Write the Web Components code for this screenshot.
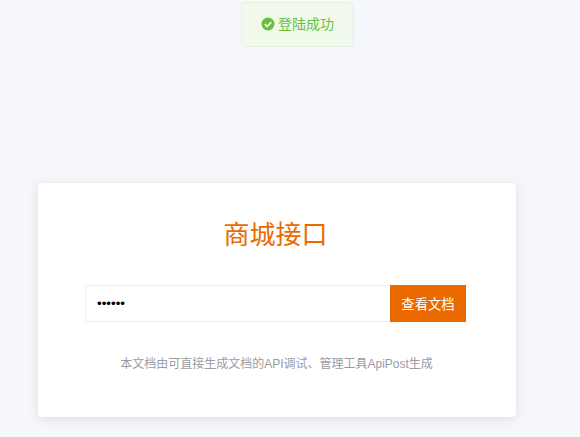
<!DOCTYPE html>
<html lang="zh">
<head>
<meta charset="utf-8">
<title>商城接口</title>
<style>
  html, body { margin: 0; height: 100%; overflow: hidden; background: #f6f7fb; }
  body { font-family: "Liberation Sans", "Noto Sans CJK SC", sans-serif; }
</style>
</head>
<body>
<toast-message>登陆成功</toast-message>
<login-card heading="商城接口" button="查看文档" value="123456">本文档由可直接生成文档的API调试、管理工具ApiPost生成</login-card>
<script>
class ToastMessage extends HTMLElement {
    connectedCallback() {
        this.attachShadow({ mode: 'open' });
        this.shadowRoot.innerHTML = `
      <style>
        :host {
          position: fixed;
          top: 2px;
          left: 241px;
          width: 113px;
          height: 45px;
          box-sizing: border-box;
          display: flex;
          align-items: center;
          justify-content: center;
          gap: 3px;
          padding-bottom: 1px;
          background: #f0f9eb;
          border: 1px solid #e1f3d8;
          border-radius: 4px;
          color: #67c23a;
          font-size: 14px;
          z-index: 10;
        }
        svg { width: 14px; height: 14px; flex: none; }
        span { margin-bottom: 2px; }
      </style>
      <svg viewBox="0 0 14 14">
        <circle cx="7" cy="7" r="6.5" fill="#67c23a"/>
        <path d="M3.8 7.2 L6.1 9.5 L10.3 5.2" fill="none" stroke="#f0f9eb" stroke-width="1.7"/>
      </svg>
      <span><slot></slot></span>
    `;
    }
}

class LoginCard extends HTMLElement {
    connectedCallback() {
        this.attachShadow({ mode: 'open' });
        this.shadowRoot.innerHTML = `
      <style>
        :host {
          display: block;
          box-sizing: border-box;
          width: 478px;
          height: 234px;
          margin: 183px 0 0 38px;
          padding: 34px 50px 0 47px;
          background: #fff;
          border-radius: 4px;
          box-shadow: 0 2px 12px 0 rgba(0, 0, 0, 0.1);
        }
        h1 {
          margin: 0;
          font-size: 26px;
          line-height: 36px;
          font-weight: 400;
          color: #eb6a00;
          text-align: center;
        }
        .row {
          display: flex;
          height: 37px;
          margin-top: 32px;
        }
        input {
          flex: 1;
          min-width: 0;
          box-sizing: border-box;
          border: 1px solid #eeeeee;
          border-right: 0;
          outline: none;
          padding: 0 11px;
          font-size: 13.333px;
          font-family: inherit;
          color: #000;
          background: #fff;
        }
        button {
          width: 76px;
          border: 0;
          padding: 0;
          background: #eb6a00;
          color: #fff;
          font-size: 13.333px;
          font-family: inherit;
        }
        p {
          margin: 33px 0 0;
          padding-left: 2px;
          font-size: 12px;
          line-height: 18px;
          color: #999ca3;
          text-align: center;
        }
      </style>
      <h1>${this.getAttribute('heading')}</h1>
      <div class="row">
        <input type="password" value="${this.getAttribute('value')}">
        <button>${this.getAttribute('button')}</button>
      </div>
      <p><slot></slot></p>
    `;
    }
}

customElements.define('toast-message', ToastMessage);
customElements.define('login-card', LoginCard);
</script>
</body>
</html>
